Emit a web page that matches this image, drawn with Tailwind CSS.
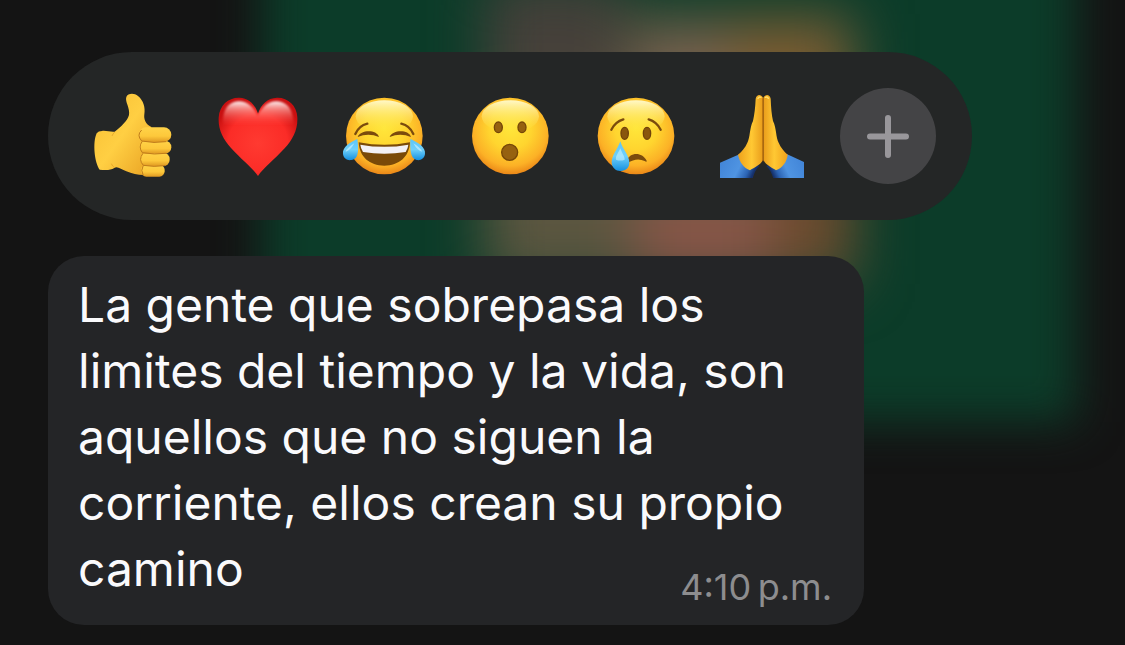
<!DOCTYPE html>
<html lang="es">
  <head>
    <meta charset="UTF-8" />
    <meta name="viewport" content="width=device-width, initial-scale=1.0" />
    <title>Reacciones</title>
    <script src="https://cdn.jsdelivr.net/npm/@tailwindcss/browser@4"></script>
  </head>
  <body class="bg-[#141414] font-['Inter','Liberation_Sans',sans-serif]">
    <div class="relative isolate min-h-screen overflow-hidden px-12 pt-[52px] pb-5">
      <!-- blurred chat behind the menu -->
      <svg class="absolute inset-0 -z-10 h-full w-full" viewBox="0 0 1125 645" preserveAspectRatio="none" aria-hidden="true">
        <defs>
          <filter id="soft" x="-30%" y="-30%" width="160%" height="160%" color-interpolation-filters="sRGB"><feGaussianBlur stdDeviation="22" /></filter>
          <filter id="softer" x="-30%" y="-30%" width="160%" height="160%" color-interpolation-filters="sRGB"><feGaussianBlur stdDeviation="27" /></filter>
        </defs>
        <rect x="262" y="-100" width="814" height="522" fill="#0c3c29" filter="url(#soft)" />
        <g filter="url(#softer)">
          <rect x="485" y="14" width="370" height="270" fill="#5b5640" />
          <rect x="485" y="-20" width="140" height="110" fill="#45403a" />
          <rect x="640" y="36" width="100" height="80" fill="#786250" />
          <rect x="730" y="24" width="115" height="90" fill="#7a5c30" />
          <rect x="635" y="195" width="140" height="85" fill="#8a5648" />
          <rect x="775" y="180" width="75" height="90" fill="#6c4a2c" />
        </g>
      </svg>

      <div class="flex w-fit flex-wrap gap-[30px] rounded-[84px] bg-[#242626] p-9">
        <button type="button" aria-label="Me gusta" class="size-24">
          <svg viewBox="12 24 288 288">
            <defs>
              <linearGradient id="hand" x1="0" y1="0" x2="1" y2="1">
                <stop offset="0" stop-color="#f7bd32" /><stop offset=".5" stop-color="#ffcf43" /><stop offset="1" stop-color="#e9a223" />
              </linearGradient>
              <linearGradient id="finger" x1="0" y1="0" x2="0" y2="1">
                <stop offset="0" stop-color="#ffd348" /><stop offset=".6" stop-color="#fdc83b" /><stop offset="1" stop-color="#e09a22" />
              </linearGradient>
            </defs>
            <path fill="url(#hand)" d="M66 153C77 151 94 157 104 155C124 139 142 123 147 105C151 84 134 65 139 51C143 40 162 38 174 48C191 62 196 83 193 103C191 117 196 133 214 141L205 284C184 287 160 283 139 274C124 268 111 257 103 264C91 272 73 270 59 269C44 249 37 189 50 160Q55 153 66 153Z" />
            <path fill="none" stroke="#dc961f" stroke-width="3" opacity=".6" d="M104 156q-6 6-8 12M104 263q-7-4-10-12" />
            <rect x="183" y="254" width="71" height="36" rx="16" fill="url(#finger)" />
            <rect x="180" y="218" width="89" height="40" rx="19" fill="url(#finger)" />
            <rect x="178" y="182" width="96" height="39" rx="19" fill="url(#finger)" />
            <rect x="176" y="142" width="98" height="44" rx="22" fill="url(#finger)" />
            <path fill="none" stroke="#c07c1b" stroke-width="3" stroke-linecap="round" d="M184 151Q169 165 185 183Q222 191 258 185M186 185Q174 201 187 218Q223 225 258 220M188 221Q174 239 190 256Q222 262 254 257M189 258Q181 271 189 285" />
          </svg>
        </button>

        <button type="button" aria-label="Me encanta" class="size-24">
          <svg viewBox="15 24 288 288">
            <defs>
              <radialGradient id="heart" cx=".5" cy=".58" r=".58">
                <stop offset="0" stop-color="#ff3a31" /><stop offset=".65" stop-color="#fb2c27" /><stop offset="1" stop-color="#c90f10" />
              </radialGradient>
              <linearGradient id="gloss" x1="0" y1="0" x2="0" y2="1">
                <stop offset="0" stop-color="#fff" stop-opacity=".95" /><stop offset=".3" stop-color="#ffb5b0" stop-opacity=".7" /><stop offset="1" stop-color="#ff4a40" stop-opacity="0" />
              </linearGradient>
              <filter id="smooth"><feGaussianBlur stdDeviation="2.5" /></filter>
            </defs>
            <path fill="url(#heart)" d="M159 288C142 263 110 239 78 204C54 177 39 149 41 113C43 75 71 52 103 53C132 54 150 73 159 101C168 73 187 54 216 53C248 52 276 76 277 112C279 149 263 178 239 205C208 239 176 263 159 288Z" />
            <path fill="url(#gloss)" filter="url(#smooth)" d="M55 137C50 96 66 66 100 64C126 63 145 80 158 108C173 79 190 63 216 64C249 66 268 93 264 137Z" />
          </svg>
        </button>

        <button type="button" aria-label="Me divierte" class="size-24">
          <svg viewBox="18 24 288 288">
            <defs>
              <radialGradient id="face" cx=".5" cy=".4" r=".61">
                <stop offset="0" stop-color="#ffe63a" /><stop offset=".45" stop-color="#ffd52f" /><stop offset=".8" stop-color="#fcb126" /><stop offset="1" stop-color="#e98417" />
              </radialGradient>
              <linearGradient id="shine" x1="0" y1="0" x2="0" y2="1">
                <stop offset="0" stop-color="#fffbd0" stop-opacity=".95" /><stop offset="1" stop-color="#ffe943" stop-opacity="0" />
              </linearGradient>
              <linearGradient id="tear" x1="0" y1="0" x2="0" y2="1">
                <stop offset="0" stop-color="#5cc5f8" /><stop offset=".5" stop-color="#6fd0fb" /><stop offset="1" stop-color="#1590e0" />
              </linearGradient>
            </defs>
            <circle cx="163" cy="168" r="115" fill="url(#face)" />
            <ellipse cx="163" cy="109" rx="86" ry="48" fill="url(#shine)" />
            <g fill="none" stroke="#7b4b0d" stroke-width="7" stroke-linecap="round">
              <path d="M76 162q11-25 36-31M250 162q-11-25-36-31" />
            </g>
            <path fill="#7b4b0d" d="M83 171C91 150 139 147 147 171Q115 158 83 171ZM179 171C187 150 235 147 243 171Q211 158 179 171Z" />
            <path fill="#7a4a08" d="M86 187Q163 202 240 187C238 231 207 257 163 257C119 257 88 231 86 187Z" />
            <path fill="#f3f1f5" d="M91 194Q163 207 235 194Q234 205 227 216Q163 226 99 216Q92 205 91 194Z" />
            <path fill="url(#tear)" d="M82 177C61 186 36 201 39 222C41 236 52 242 64 240C88 237 86 206 82 177Z" />
            <path fill="url(#tear)" d="M241 177C262 186 288 201 285 222C283 236 272 242 260 240C240 236 240 206 241 177Z" />
            <path fill="#c8f0ff" opacity=".7" d="M73 190q-22 13-26 25q13-2 26-25ZM250 190q22 13 26 25q-13-2-26-25Z" />
          </svg>
        </button>

        <button type="button" aria-label="Me asombra" class="size-24">
          <svg viewBox="21 24 288 288">
            <circle cx="166" cy="168" r="115" fill="url(#face)" />
            <ellipse cx="166" cy="109" rx="86" ry="48" fill="url(#shine)" />
            <g fill="#966110" stroke="#754608" stroke-width="4">
              <ellipse cx="130" cy="142" rx="12" ry="16" />
              <ellipse cx="201" cy="142" rx="12" ry="16" />
              <circle cx="164" cy="217" r="24" />
            </g>
          </svg>
        </button>

        <button type="button" aria-label="Me entristece" class="size-24">
          <svg viewBox="24 24 288 288">
            <circle cx="168" cy="168" r="115" fill="url(#face)" />
            <ellipse cx="168" cy="109" rx="86" ry="48" fill="url(#shine)" />
            <g fill="#89560d" stroke="#70420a" stroke-width="4">
              <ellipse cx="134" cy="160" rx="11" ry="18" />
              <ellipse cx="201" cy="160" rx="11" ry="18" />
            </g>
            <g fill="none" stroke="#7b4b0d" stroke-width="7" stroke-linecap="round">
              <path d="M94 149q12-24 36-31M242 149q-12-24-36-31" />
            </g>
            <path fill="#7b4b0d" d="M139 243C148 218 184 212 200 242Q201 248 194 243Q170 231 143 249Z" />
            <path fill="url(#tear)" d="M121 184C113 207 95 227 95 246C95 263 107 273 122 273C138 273 149 262 148 246C147 226 128 208 121 184Z" />
            <path fill="#c8f0ff" opacity=".6" d="M121 205C113 222 106 231 108 239Q121 244 134 239C135 231 125 217 121 205Z" />
          </svg>
        </button>

        <button type="button" aria-label="Gracias" class="size-24">
          <svg viewBox="27 24 288 288">
            <defs>
              <linearGradient id="sleeveLeft" x1="0" y1="0" x2="1" y2=".3">
                <stop offset="0" stop-color="#3f82d6" /><stop offset=".6" stop-color="#4f94e2" /><stop offset=".85" stop-color="#2c64b4" /><stop offset="1" stop-color="#15306a" />
              </linearGradient>
              <linearGradient id="sleeveRight" x1="1" y1="0" x2="0" y2=".3">
                <stop offset="0" stop-color="#3f82d6" /><stop offset=".6" stop-color="#4f94e2" /><stop offset=".85" stop-color="#2c64b4" /><stop offset="1" stop-color="#15306a" />
              </linearGradient>
              <linearGradient id="palmLeft" x1="0" y1="0" x2="1" y2="0">
                <stop offset="0" stop-color="#eea11c" /><stop offset=".55" stop-color="#ffc833" /><stop offset="1" stop-color="#e99c1b" />
              </linearGradient>
              <linearGradient id="palmRight" x1="1" y1="0" x2="0" y2="0">
                <stop offset="0" stop-color="#eea11c" /><stop offset=".55" stop-color="#ffc833" /><stop offset="1" stop-color="#e99c1b" />
              </linearGradient>
            </defs>
            <path fill="url(#sleeveLeft)" d="M45 248L105 222L163 258Q151 268 143 294H45Z" />
            <path fill="url(#sleeveRight)" d="M297 246L245 222L184 258Q196 268 205 294H297Z" />
            <path fill="url(#palmLeft)" d="M174 53C168 42 155 42 152 56C151 82 148 105 144 123C133 145 136 172 127 188C121 202 111 214 99 224C103 245 116 264 135 271C145 262 165 258 174 239Z" />
            <path fill="url(#palmRight)" d="M175 53C181 42 194 42 197 56C198 82 200 105 204 123C215 145 212 172 221 188C227 202 237 214 248 224C246 245 232 264 213 271C203 262 184 258 175 239Z" />
            <path fill="none" stroke="#a9630b" stroke-width="4" stroke-linecap="round" d="M174 56V242" />
            <path fill="none" stroke="#ffe06b" stroke-width="4" stroke-linecap="round" d="M159 55q4-6 9-3M181 52q6-3 9 3" />
          </svg>
        </button>

        <button type="button" aria-label="Más reacciones" class="flex size-24 items-center justify-center rounded-full bg-[#444446]">
          <svg class="size-12" viewBox="0 0 48 48" fill="none" stroke="#99979b" stroke-width="6" stroke-linecap="round">
            <path d="M24 6v37M6 24.500h36" />
          </svg>
        </button>
      </div>

      <div class="mt-9 flow-root max-w-[816px] rounded-[36px] bg-[#242527] pt-4 pr-8 pb-[22px] pl-[30px]">
        <p class="inline text-[48px] leading-[66px] text-[#fafafc]">La gente que sobrepasa los limites del tiempo y la vida, son aquellos que no siguen la corriente, ellos crean su propio camino</p>
        <time datetime="16:10" class="float-right mt-[35px] text-[36px] leading-8 text-[#8d8d8f]">4:10&#8239;p.m.</time>
      </div>
    </div>
  </body>
</html>
